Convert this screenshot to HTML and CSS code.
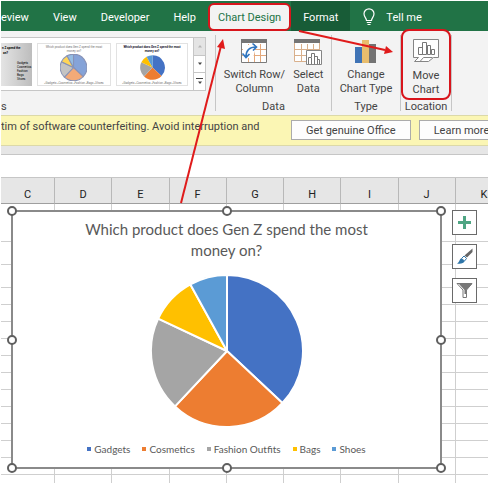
FILE: index.html
```html
<!DOCTYPE html>
<html lang="en">
<head>
    <meta charset="UTF-8">
    <meta name="viewport" content="width=device-width, initial-scale=1.0">
    <title>Excel | Move Chart</title>
    <link rel="stylesheet" href="styles.css">
</head>
<body>
    <svg class="defs" width="0" height="0" aria-hidden="true">
        <defs>
            <!-- 37 / 25 / 20 / 10 / 8 percent -->
            <symbol id="pie" viewBox="-77 -77 154 154">
                <g stroke-linejoin="round">
                    <path fill="var(--gadgets)" d="M0 0V-76A76 76 0 0 1 55.4 52Z"/>
                    <path fill="var(--cosmetics)" d="M0 0L55.4 52A76 76 0 0 1 -52 55.4Z"/>
                    <path fill="var(--fashion)" d="M0 0L-52 55.4A76 76 0 0 1 -68.8 -32.4Z"/>
                    <path fill="var(--bags)" d="M0 0L-68.8 -32.4A76 76 0 0 1 -36.6 -66.6Z"/>
                    <path fill="var(--shoes)" d="M0 0L-36.6 -66.6A76 76 0 0 1 0 -76Z"/>
                </g>
            </symbol>
        </defs>
    </svg>

    <div class="window">
        <nav class="tabs">
            <button class="tab tab-first">eview</button>
            <button class="tab">View</button>
            <button class="tab">Developer</button>
            <button class="tab">Help</button>
            <button class="tab tab-active">Chart Design</button>
            <button class="tab tab-context">Format</button>
            <button class="tab tab-tell">
                <svg width="14" height="18" viewBox="0 0 14 18" fill="none" stroke="#fff" stroke-width="1.2">
                    <path d="M4.5 12.5C4.5 10 2 9 2 5.8A5 5 0 0 1 12 5.8C12 9 9.500 10 9.500 12.500Z"/>
                    <path d="M4.800 14.500H9.200M5.500 16.500H8.500"/>
                </svg>
                Tell me
            </button>
        </nav>

        <div class="ribbon">
            <div class="group group-styles">
                <div class="gallery">
                    <div class="thumbs">
                        <button class="thumb thumb-cut" aria-label="Style 6">
                            <svg width="31" height="43" viewBox="0 0 31 43">
                                <text x="1" y="6" font-size="3" font-weight="700">n Z spend the</text>
                                <text x="2" y="11" font-size="3" font-weight="700">on?</text>
                                <g font-size="3">
                                    <text x="16" y="21">Gadgets</text>
                                    <text x="16" y="25">Cosmetics</text>
                                    <text x="16" y="29">Fashion</text>
                                    <text x="16" y="33">Bags</text>
                                    <text x="16" y="37">Shoes</text>
                                </g>
                            </svg>
                        </button>
                        <button class="thumb" aria-label="Style 7">
                            <svg width="72" height="41" viewBox="0 0 72 41">
                                <g font-size="3" text-anchor="middle" fill="#777">
                                    <text x="36" y="4">Which product does Gen Z spend the most</text>
                                    <text x="36" y="8">money on?</text>
                                    <text x="36" y="40">▪Gadgets ▪Cosmetics ▪Fashion ▪Bags ▪Shoes</text>
                                </g>
                                <g class="pale" stroke="#4a5a90" stroke-width="6">
                                    <use href="#pie" x="22" y="10" width="27" height="27"/>
                                </g>
                            </svg>
                        </button>
                        <button class="thumb" aria-label="Style 8">
                            <svg width="70" height="41" viewBox="0 0 70 41">
                                <g font-size="3" text-anchor="middle" fill="#223">
                                    <text x="35" y="4" font-weight="700">Which product does Gen Z spend the most</text>
                                    <text x="35" y="8" font-weight="700">money on?</text>
                                    <text x="35" y="40" fill="#777">▪Gadgets ▪Cosmetics ▪Fashion ▪Bags ▪Shoes</text>
                                </g>
                                <use href="#pie" x="23" y="11" width="25" height="25"/>
                            </svg>
                        </button>
                    </div>
                    <div class="scroller">
                        <button aria-label="Previous row" disabled><svg width="6" height="4"><path d="M1 3.500L3 1L5 3.500Z"/></svg></button>
                        <button aria-label="Next row"><svg width="6" height="4"><path d="M1 0.500L3 3L5 0.500Z"/></svg></button>
                        <button aria-label="More styles"><svg width="8" height="7"><path d="M0 0H7V1H0ZM2 3.500L4 6L6 3.500Z"/></svg></button>
                    </div>
                </div>
                <div class="caption">s</div>
            </div>

            <div class="group group-data">
                <div class="commands">
                    <button class="command">
                        <svg width="26" height="24" viewBox="0 0 26 24">
                            <path fill="#fff" stroke="#7a7a7a" d="M.5.5H25.500V23.500H.5Z"/>
                            <path fill="#757575" d="M0 0H26V4H0Z"/>
                            <path fill="none" stroke="#e3a87c" d="M1 10.500H25M1 16.500H25M7.500 5V23M13.500 5V23M19.500 5V23"/>
                            <path fill="#fff" d="M2 6H14V12L12 19H2Z"/>
                            <path fill="none" stroke="#2f75c0" stroke-width="1.600" d="M5 18C5 12 8 8 15 8M11.500 4.500L15.500 8L12 11.500M1.500 14.500L5 18.500L8.500 15"/>
                        </svg>
                        <span>Switch Row/<br>Column</span>
                    </button>
                    <button class="command">
                        <svg width="28" height="26" viewBox="0 0 28 26">
                            <path fill="#fff" stroke="#d9b08c" d="M.5.5H25.500V22.500H.5ZM1 10.500H25M1 16.500H25M7.500 5V23M13.500 5V23M19.500 5V23"/>
                            <path fill="#757575" d="M0 0H26V4H0Z"/>
                            <path fill="#fff" stroke="#858585" d="M12.500 11.500H27.500V25.500H12.500Z"/>
                            <path fill="none" stroke="#777" d="M14.500 25V18.500H17.500V25M17.500 18V14.500H20.500V25M20.500 17.500H23.500V25M23.500 20.500H25.500V25"/>
                        </svg>
                        <span>Select<br>Data</span>
                    </button>
                </div>
                <div class="caption">Data</div>
            </div>

            <div class="group group-type">
                <div class="commands">
                    <button class="command">
                        <svg width="21" height="24" viewBox="0 0 21 24">
                            <path fill="#3f73b5" d="M0 8H7V24H0Z"/>
                            <path fill="#e8bd6d" d="M7 1H14V24H7Z"/>
                            <path fill="#737373" d="M14 5H21V24H14Z"/>
                        </svg>
                        <span>Change<br>Chart Type</span>
                    </button>
                </div>
                <div class="caption">Type</div>
            </div>

            <div class="group group-location">
                <div class="commands">
                    <button class="command command-marked">
                        <svg width="26" height="24" viewBox="0 0 26 24" fill="#fff" stroke="#858585">
                            <path d="M.5.5H25.500V18.500H20.500L15.500 22.500H1.500L5.500 18.500H.5Z"/>
                            <path d="M7 22.500L10.500 18.500H19.500" fill="none"/>
                            <path stroke="#777" d="M5.500 15.500V8.500H9.500V15.500ZM9.500 15.500V3.500H13.500V15.500ZM14.500 15.500V6.500H17.500V15.500ZM18.500 15.500V10.500H21.500V15.500Z"/>
                        </svg>
                        <span>Move<br>Chart</span>
                    </button>
                </div>
                <div class="caption">Location</div>
            </div>
        </div>

        <div class="notice">
            <p>tim of software counterfeiting. Avoid interruption and</p>
            <button class="notice-button">Get genuine Office</button>
            <button class="notice-button">Learn more</button>
        </div>

        <div class="formula-bar">
            <input type="text" aria-label="Formula">
        </div>

        <main class="sheet">
            <table class="cells">
                <thead>
                    <tr><th class="col-first">C</th><th>D</th><th>E</th><th>F</th><th>G</th><th>H</th><th>I</th><th>J</th><th>K</th></tr>
                </thead>
                <tbody>
                    <tr class="row-tall"><td></td><td></td><td></td><td></td><td></td><td></td><td></td><td></td><td></td></tr>
                    <tr class="row-medium"><td></td><td></td><td></td><td></td><td></td><td></td><td></td><td></td><td></td></tr>
                    <tr class="row-medium"><td></td><td></td><td></td><td></td><td></td><td></td><td></td><td></td><td></td></tr>
                    <tr><td></td><td></td><td></td><td></td><td></td><td></td><td></td><td></td><td></td></tr>
                    <tr><td></td><td></td><td></td><td></td><td></td><td></td><td></td><td></td><td></td></tr>
                    <tr><td></td><td></td><td></td><td></td><td></td><td></td><td></td><td></td><td></td></tr>
                    <tr><td></td><td></td><td></td><td></td><td></td><td></td><td></td><td></td><td></td></tr>
                    <tr><td></td><td></td><td></td><td></td><td></td><td></td><td></td><td></td><td></td></tr>
                    <tr><td></td><td></td><td></td><td></td><td></td><td></td><td></td><td></td><td></td></tr>
                    <tr><td></td><td></td><td></td><td></td><td></td><td></td><td></td><td></td><td></td></tr>
                    <tr><td></td><td></td><td></td><td></td><td></td><td></td><td></td><td></td><td></td></tr>
                    <tr><td></td><td></td><td></td><td></td><td></td><td></td><td></td><td></td><td></td></tr>
                    <tr><td></td><td></td><td></td><td></td><td></td><td></td><td></td><td></td><td></td></tr>
                    <tr><td></td><td></td><td></td><td></td><td></td><td></td><td></td><td></td><td></td></tr>
                    <tr class="row-last"><td></td><td></td><td></td><td></td><td></td><td></td><td></td><td></td><td></td></tr>
                </tbody>
            </table>

            <div class="chart-area">
                <section class="chart">
                    <h1>Which product does Gen Z spend the most money on?</h1>
                    <svg class="chart-pie" width="154" height="154" stroke="#fff" stroke-width="2"><use href="#pie"/></svg>
                    <ul class="legend">
                        <li class="gadgets">Gadgets</li>
                        <li class="cosmetics">Cosmetics</li>
                        <li class="fashion">Fashion Outfits</li>
                        <li class="bags">Bags</li>
                        <li class="shoes">Shoes</li>
                    </ul>
                    <i class="handle top left"></i>
                    <i class="handle top center"></i>
                    <i class="handle top right"></i>
                    <i class="handle middle left"></i>
                    <i class="handle middle right"></i>
                    <i class="handle bottom left"></i>
                    <i class="handle bottom center"></i>
                    <i class="handle bottom right"></i>
                </section>
                <div class="chart-tools">
                    <button aria-label="Chart Elements">
                        <svg width="17" height="17" viewBox="0 0 17 17"><path fill="#4fa583" d="M7 2H10V7H15V10H10V15H7V10H2V7H7Z"/></svg>
                    </button>
                    <button aria-label="Chart Styles">
                        <svg width="17" height="17" viewBox="0 0 17 17">
                            <path fill="#666" d="M16.500 0.500V4L11 9.500L8.500 7.500Z"/>
                            <path fill="#fff" stroke="#2e75a8" d="M8 8L10.500 10.500L8.500 13L5.500 10.500Z"/>
                            <path fill="#2e75a8" d="M5 10.500L8.500 13C8 15.500 4.500 16 1 15.500C3.500 14.500 3 12 5 10.500Z"/>
                        </svg>
                    </button>
                    <button aria-label="Chart Filters">
                        <svg width="17" height="17" viewBox="0 0 17 17">
                            <path fill="#fff" stroke="#777" d="M1 1.500H16L10.500 8V15.500H7V8Z"/>
                            <path fill="#777" d="M3 2H16L10 8.500V12H8.500V8Z"/>
                        </svg>
                    </button>
                </div>
            </div>
        </main>

        <svg class="arrows" width="400" height="210" viewBox="0 0 400 210" aria-hidden="true">
            <g stroke="#e01b1b" stroke-width="2">
                <path d="M180 202L220 45"/>
                <path d="M298 30L384 49"/>
            </g>
            <g fill="#e01b1b">
                <path d="M222 38L224 48L216 46Z"/>
                <path d="M392 51L383 53L385 45Z"/>
            </g>
        </svg>
    </div>
</body>
</html>
```
FILE: styles.css
```css
:root {
    --excel-green: #217346;
    --excel-green-dark: #185c37;
    --ribbon: #f3f3f3;
    --line: #c6c6c6;
    --marker: #d8151c;
    --text: #444444;
    --gadgets: #4472c4;
    --cosmetics: #ed7d31;
    --fashion: #a5a5a5;
    --bags: #ffc000;
    --shoes: #5b9bd5;
}

* {
    box-sizing: border-box;
}

body {
    margin: 0;
    padding: 1px 1px 0 0;
    background-color: #ffffff;
    color: var(--text);
    font-family: Roboto, "Open Sans", sans-serif;
    font-size: 11px;
    overflow: hidden;
}

button {
    margin: 0;
    padding: 0;
    border: none;
    background: none;
    color: inherit;
    font: inherit;
    cursor: pointer;
}

svg {
    display: block;
    flex: none;
}

.defs {
    position: absolute;
}

.window {
    position: relative;
    margin-left: 1px;
    overflow: hidden;
}

/* Tabs */
.tabs {
    display: flex;
    height: 30px;
    background-color: var(--excel-green);
    color: #ffffff;
}

.tab {
    padding: 2px 12px 0;
    white-space: nowrap;
}

.tab-first {
    padding-left: 0;
}

.tab-active {
    margin-top: 2px;
    padding: 0 8px;
    border: 2px solid var(--marker);
    border-radius: 6px;
    background-color: var(--ribbon);
    color: var(--excel-green);
}

.tab-context {
    background-color: var(--excel-green-dark);
}

.tab-tell {
    display: flex;
    align-items: center;
    gap: 10px;
}

/* Ribbon */
.ribbon {
    display: flex;
    height: 84px;
    background-color: var(--ribbon);
}

.group {
    display: flex;
    flex-direction: column;
    justify-content: space-between;
    border-right: 1px solid var(--line);
    margin: 4px 0;
}

.group-styles {
    width: 215px;
}

.group-data {
    width: 116px;
}

.group-type {
    width: 69px;
}

.group-location {
    width: 51px;
}

.caption {
    margin-bottom: -3px;
    line-height: 14px;
    text-align: center;
}

.group-styles .caption {
    text-align: left;
}

.gallery {
    display: flex;
    width: 205px;
    height: 54px;
    margin-top: 2px;
    border: 1px solid var(--line);
    border-left: none;
    background-color: #ffffff;
}

.thumbs {
    display: flex;
    flex: 1;
    align-items: center;
    gap: 5px;
}

.thumb {
    border: 1px solid #e2e2e2;
}

.thumb-cut {
    border: none;
    background: linear-gradient(90deg, #e4e4e4, #bdbdbd);
}

.pale {
    opacity: 0.65;
}

.scroller {
    display: flex;
    flex-direction: column;
    width: 12px;
    border-left: 1px solid var(--line);
}

.scroller button {
    display: flex;
    flex: 1;
    align-items: center;
    justify-content: center;
    fill: #444444;
}

.scroller button + button {
    border-top: 1px solid var(--line);
}

.scroller button:disabled {
    background-color: #e4e4e4;
    fill: #b5b5b5;
}

.commands {
    display: flex;
    justify-content: center;
    gap: 8px;
}

.command {
    display: flex;
    flex-direction: column;
    align-items: center;
    height: 61px;
    padding-top: 4px;
    line-height: 14px;
    white-space: nowrap;
}

.command span {
    margin-top: auto;
}

.command-marked {
    width: 50px;
    height: 71px;
    margin-top: -6px;
    padding: 8px 0 1px;
    border: 2px solid var(--marker);
    border-radius: 8px;
}

/* Licence notice */
.notice {
    display: flex;
    align-items: flex-start;
    height: 31px;
    padding-top: 4px;
    border-top: 1px solid #dcd9a8;
    border-bottom: 1px solid #dcd9a8;
    background-color: #fbf6b4;
}

.notice p {
    flex: none;
    width: 290px;
    margin: 0;
    line-height: 14px;
    white-space: nowrap;
}

.notice-button {
    flex: none;
    height: 20px;
    margin-right: 8px;
    padding: 0 14px;
    border: 1px solid #ababab;
    background-color: #fdfdfd;
    white-space: nowrap;
}

/* Formula bar */
.formula-bar {
    padding: 8px 0 0;
    background-color: #e6e6e6;
}

.formula-bar input {
    display: block;
    width: 100%;
    height: 24px;
    border: solid var(--line);
    border-width: 1px 0;
    background-color: #ffffff;
}

/* Sheet */
.sheet {
    position: relative;
    overflow: hidden;
}

.cells {
    width: 512px;
    border-collapse: separate;
    border-spacing: 0;
    table-layout: fixed;
}

.cells th {
    height: 26px;
    padding: 8px 0 0;
    border-right: 1px solid #b8b8b8;
    border-bottom: 1px solid #9f9f9f;
    background-color: #e6e6e6;
    color: #222222;
    font-weight: 400;
    line-height: 14px;
}

.cells .col-first {
    width: 54px;
}

.cells td {
    height: 17px;
    padding: 0;
    border-right: 1px solid #cfcfcf;
    border-bottom: 1px solid #cfcfcf;
}

.cells .row-tall td {
    height: 38px;
}

.cells .row-medium td {
    height: 23px;
}

.cells .row-last td {
    height: 8px;
    border-bottom: none;
}

/* Chart object floating over the cells */
.chart-area {
    position: absolute;
    top: 32px;
    left: 10px;
    display: flex;
    align-items: flex-start;
    gap: 10px;
}

.chart {
    position: relative;
    display: flex;
    flex-direction: column;
    align-items: center;
    width: 431px;
    padding: 7px 0 11px;
    border: 2px solid #8a8a8a;
    background-color: #ffffff;
    color: #595959;
    font-family: Lato, sans-serif;
}

.chart h1 {
    width: 320px;
    margin: 0;
    font-size: 15px;
    font-weight: 400;
    line-height: 21px;
    text-align: center;
}

.chart-pie {
    margin-top: 13px;
}

.legend {
    display: flex;
    gap: 12px;
    margin: 14px 0 0;
    padding: 0;
    list-style: none;
    font-size: 10px;
    line-height: 14px;
}

.legend li {
    display: flex;
    align-items: center;
    gap: 3px;
    white-space: nowrap;
}

.legend li::before {
    content: "";
    width: 4px;
    height: 4px;
    background-color: var(--swatch);
}

.gadgets { --swatch: var(--gadgets); }
.cosmetics { --swatch: var(--cosmetics); }
.fashion { --swatch: var(--fashion); }
.bags { --swatch: var(--bags); }
.shoes { --swatch: var(--shoes); }

.handle {
    position: absolute;
    width: 10px;
    height: 10px;
    border: 2px solid #5f5f5f;
    border-radius: 50%;
    background-color: #ffffff;
}

.top { top: -6px; }
.middle { top: calc(50% - 5px); }
.bottom { bottom: -6px; }
.left { left: -6px; }
.center { left: calc(50% - 5px); }
.right { right: -6px; }

.chart-tools {
    display: flex;
    flex-direction: column;
    gap: 9px;
}

.chart-tools button {
    display: flex;
    align-items: center;
    justify-content: center;
    width: 25px;
    height: 25px;
    border: 1px solid #6a6a6a;
    background-color: #ffffff;
}

.arrows {
    position: absolute;
    top: 0;
    left: 0;
    pointer-events: none;
}
```
